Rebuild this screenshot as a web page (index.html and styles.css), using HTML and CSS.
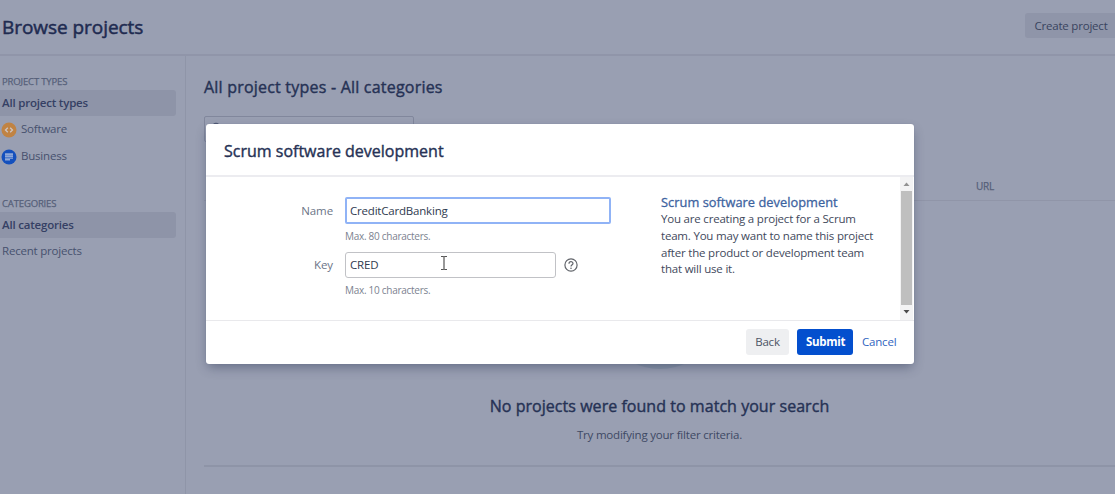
FILE: index.html
```html
<!DOCTYPE html>
<html lang="en">
<head>
<meta charset="utf-8">
<title>Browse projects</title>
<link rel="stylesheet" href="styles.css">
</head>
<body>
<div class="page">
  <header class="topbar">
    <h1>Browse projects</h1>
    <button class="create">Create project</button>
  </header>
  <div class="columns">
    <nav class="sidebar">
      <h3>PROJECT TYPES</h3>
      <a class="item selected">All project types</a>
      <a class="item icon-item software">
        <svg width="16" height="16" viewBox="0 0 16 16"><circle cx="8" cy="8" r="7.5" fill="#c08343"/><path d="M6.800 5.700 4.500 8l2.300 2.300M9.200 5.700 11.500 8l-2.300 2.300" fill="none" stroke="#cdc5c4" stroke-width="1.300"/></svg>
        <span>Software</span></a>
      <a class="item icon-item business">
        <svg width="16" height="16" viewBox="0 0 16 16"><circle cx="8" cy="8" r="7.500" fill="#1450bd"/><path d="M4 4.200h8v1.700H4zM4 6.300h8v1.700H4zM4 8.400h8v1.300H4zM4 10.100h5v1.500H4z" fill="#8fa8d8"/></svg>
        <span>Business</span></a>
      <h3 class="second">CATEGORIES</h3>
      <a class="item selected">All categories</a>
      <a class="item recent">Recent projects</a>
    </nav>
    <main class="main">
      <h2 class="listing">All project types - All categories</h2>
      <div class="search"><svg width="12" height="12" viewBox="0 0 12 12"><circle cx="5" cy="5" r="3.5" fill="none" stroke="#4c5671" stroke-width="1.4"/><path d="m8 8 3 3" stroke="#4c5671" stroke-width="1.4"/></svg></div>
      <div class="thead">URL</div>
      <div class="empty">
        <div class="art"></div>
        <h2 class="none">No projects were found to match your search</h2>
        <p>Try modifying your filter criteria.</p>
      </div>
    </main>
  </div>
</div>
<section class="dialog">
  <header class="dialog-head"><h2>Scrum software development</h2></header>
  <div class="dialog-body">
    <form class="form">
      <label>Name</label>
      <div class="field name">CreditCardBanking</div>
      <small>Max. 80 characters.</small>
      <label>Key</label>
      <div class="key-row">
        <div class="field key">CRED</div>
        <svg width="14" height="14" viewBox="0 0 14 14"><circle cx="7" cy="7" r="6.1" fill="none" stroke="#62656b" stroke-width="1.2"/><path d="M5 5.700c0-2.700 4-2.600 4-.2C9 6.800 7 6.700 7 8.500" fill="none" stroke="#62656b" stroke-width="1.2"/><circle cx="7" cy="10.300" r=".8" fill="#62656b"/></svg>
      </div>
      <small>Max. 10 characters.</small>
    </form>
    <aside class="about">
      <h4>Scrum software development</h4>
      <p>You are creating a project for a Scrum<br>team. You may want to name this project<br>after the product or development team<br>that will use it.</p>
    </aside>
    <div class="scrollbar">
      <svg width="13" height="14" viewBox="0 0 13 14"><path d="M3.500 9h6l-3-3.500z" fill="#929292"/></svg>
      <div class="thumb"></div>
      <svg width="13" height="14" viewBox="0 0 13 14"><path d="M3.500 5h6l-3 3.500z" fill="#4c4c4c"/></svg>
    </div>
  </div>
  <footer class="dialog-foot">
    <button class="back">Back</button>
    <button class="submit">Submit</button>
    <a class="cancel">Cancel</a>
  </footer>
</section>
<svg class="cursor" width="8" height="16" viewBox="0 0 8 16"><path d="M1 1.500h2l1 .6 1-.6h2M4 2v12M1 14.500h2l1-.6 1 .6h2" fill="none" stroke="#555" stroke-width="1.200"/></svg>
</body>
</html>
```
FILE: styles.css
```css
* { box-sizing: border-box; }
body { margin: 0; width: 1115px; height: 494px; overflow: hidden; background: #999fb2; color: #3d4866; font: 11.5px/16px "Open Sans", "Noto Sans", sans-serif; letter-spacing: -.2px; white-space: nowrap; }
h1, h2, h3, h4, p { margin: 0; font-weight: 400; }
h1, h2, h4 { -webkit-text-stroke: .4px currentColor; letter-spacing: 0; }
button { border: 0; padding: 0; font: inherit; letter-spacing: inherit; color: inherit; white-space: nowrap; }
.page { height: 494px; display: flex; flex-direction: column; }
.topbar { height: 56px; flex: none; display: flex; justify-content: space-between; align-items: flex-start; border-bottom: 2px solid #9095a9; }
h1 { font-size: 19px; line-height: 28px; padding: 13px 0 0 2px; color: #1f2b51; -webkit-text-stroke-width: .5px; letter-spacing: -.05px; }
.create { margin-top: 13px; width: 90px; height: 25px; padding-left: 2px; background: #8f95a9; border-radius: 3px 0 0 3px; color: #39445f; }
.columns { flex: 1; display: flex; }
.sidebar { width: 186px; border-right: 1px solid #8f95a8; padding-top: 18px; display: flex; flex-direction: column; }
h3 { font-size: 9.5px; line-height: 16px; padding-left: 2px; color: #566079; -webkit-text-stroke: .25px currentColor; letter-spacing: -.15px; }
.item { display: flex; align-items: center; height: 26px; width: 176px; padding-left: 2px; color: #47516e; }
.selected { background: #8e94a8; border-radius: 0 3px 3px 0; color: #354064; font-weight: 600; }
.icon-item { gap: 4px; padding-left: 1px; padding-top: 1px; }
.icon-item span { padding-bottom: 2px; }
.business { margin-top: 1px; }
.second { margin-top: 27px; }
.main { flex: 1; padding: 17px 0 0 18px; }
.main h2, .dialog h2 { font-size: 16px; line-height: 28px; color: #263255; }
.main .listing { letter-spacing: .21px; }
.search { margin-top: 15px; width: 210px; height: 26px; border: 1px solid #81879c; border-radius: 2px; padding: 5px 0 0 6px; }
.thead { height: 59px; padding: 36px 0 0 772px; border-bottom: 1px solid #9095a8; font-size: 10px; color: #566079; -webkit-text-stroke: .25px currentColor; }
.empty { height: 266px; border-bottom: 2px solid #8e94a7; text-align: center; display: flex; flex-direction: column; align-items: center; }
.art { height: 50px; width: 80px; margin-top: 118px; border-radius: 50%; background: #8995a8; }
.none { margin-top: 23px; }
.main .none { letter-spacing: .04px; }
.empty p { margin-top: 7px; color: #3e4964; }
.dialog { position: absolute; left: 206px; top: 124px; width: 708px; height: 240px; background: #fff; border-radius: 3px; box-shadow: 0 0 1px #6f778f, 0 5px 12px -2px rgba(35,46,78,.45); display: flex; flex-direction: column; }
.dialog-head { height: 53px; padding: 13px 18px; border-bottom: 2px solid #ececf0; }
.dialog-body { height: 143px; display: flex; }
.form { width: 455px; padding: 20px 0 0 80px; display: grid; grid-template-columns: 47px 1fr; grid-template-rows: 27px 28px 26px 26px; column-gap: 12px; align-items: center; color: #6c7587; }
.form label { text-align: right; letter-spacing: -.1px; }
.field { border: 1px solid #c1c2c6; border-radius: 3px; padding-left: 4px; height: 26px; display: flex; align-items: center; color: #303b50; }
.name { border: 2px solid #90b3f6; border-radius: 2px; width: 266px; height: 27px; padding-left: 3px; }
.form small { grid-column: 2; font-size: 10px; color: #7c8290; position: relative; top: -1px; letter-spacing: -.28px; }
.form label + .field + small { top: -2px; }
.key-row { display: flex; align-items: center; gap: 8px; }
.key { width: 211px; }
.about { width: 239px; padding-top: 17px; color: #42495c; line-height: 16.8px; }
h4 { font-size: 12.8px; line-height: 17px; color: #3d639f; -webkit-text-stroke-width: .3px; letter-spacing: .04px; }
.scrollbar { width: 13px; background: #f3f3f4; display: flex; flex-direction: column; }
.scrollbar svg { display: block; }
.thumb { height: 114px; width: 11px; margin: 0 1px; background: #bfbfbf; }
.dialog-foot { flex: 1; border-top: 1px solid #e9e9ec; padding: 8px 18px 0 0; display: flex; justify-content: flex-end; align-items: flex-start; }
.back { width: 43px; height: 26px; background: #eeeff1; border-radius: 3px; color: #4c5465; }
.submit { width: 56px; height: 26px; padding-left: 1px; margin-left: 8px; background: #034fce; color: #fff; border-radius: 3px; font-weight: 700; letter-spacing: -.3px; }
.cancel { margin-left: 9px; line-height: 26px; color: #3065bf; width: 34px; }
.cursor { position: absolute; left: 440px; top: 255px; }
```
